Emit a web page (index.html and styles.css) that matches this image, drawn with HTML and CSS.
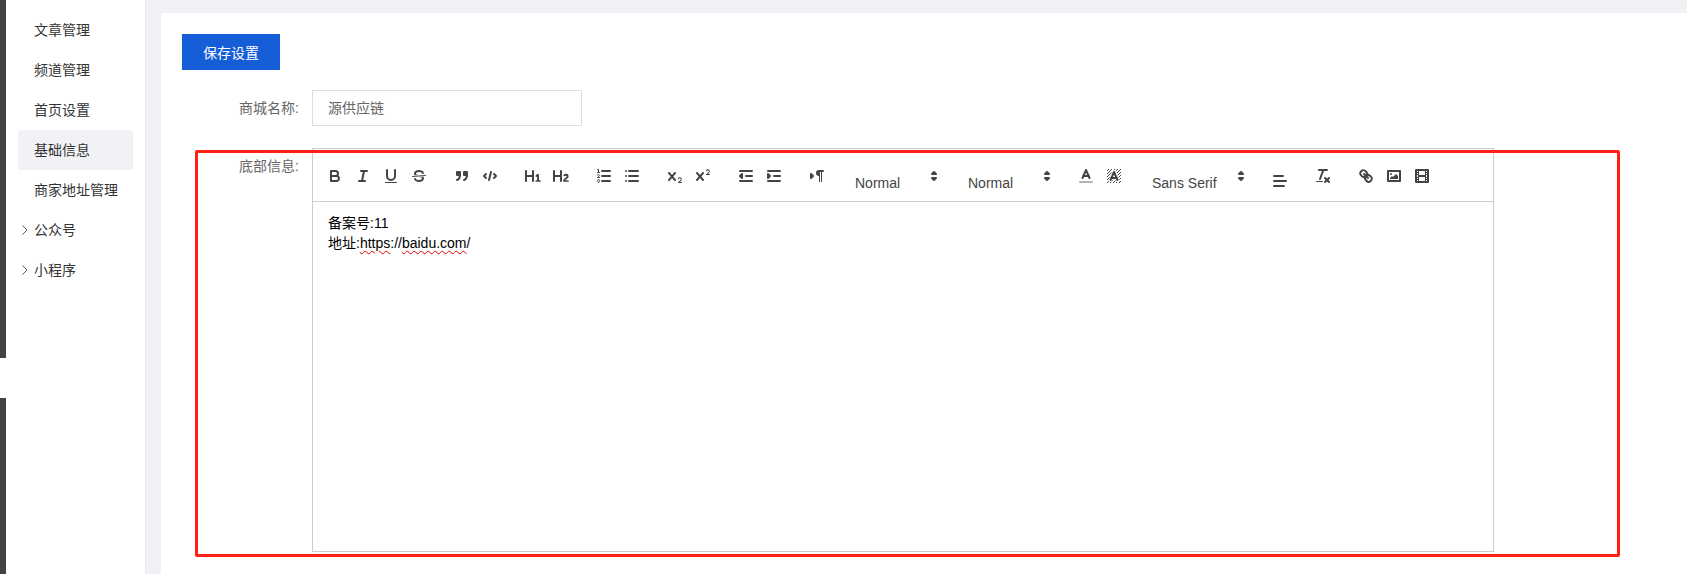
FILE: index.html
```html
<!DOCTYPE html>
<html lang="zh-CN">
<head>
<meta charset="utf-8">
<title>基础信息</title>
<link rel="stylesheet" href="styles.css">
</head>
<body>
<div class="app">
  <div class="rail"><div class="rail-top"></div><div class="rail-bottom"></div></div>
  <nav class="side">
    <a class="item">文章管理</a>
    <a class="item">频道管理</a>
    <a class="item">首页设置</a>
    <a class="item active">基础信息</a>
    <a class="item">商家地址管理</a>
    <a class="item"><svg class="chev" viewBox="0 0 8 12"><polyline points="1.5 1.5 6 6 1.5 10.5"/></svg>公众号</a>
    <a class="item"><svg class="chev" viewBox="0 0 8 12"><polyline points="1.5 1.5 6 6 1.5 10.5"/></svg>小程序</a>
  </nav>
  <main class="main">
    <section class="panel">
      <button class="save">保存设置</button>
      <div class="row">
        <label class="lab">商城名称:</label>
        <div class="input">源供应链</div>
      </div>
      <div class="row row-editor">
        <label class="lab">底部信息:</label>
        <div class="editor">
          <div class="toolbar">
            <div class="grp">
              <span class="btn"><svg viewBox="0 0 18 18"><path class="s" d="M5,4H9.5A2.5,2.5,0,0,1,12,6.5v0A2.5,2.5,0,0,1,9.5,9H5A0,0,0,0,1,5,9V4A0,0,0,0,1,5,4Z"/><path class="s" d="M5,9h5.5A2.5,2.5,0,0,1,13,11.5v0A2.5,2.5,0,0,1,10.5,14H5a0,0,0,0,1,0,0V9A0,0,0,0,1,5,9Z"/></svg></span>
              <span class="btn"><svg viewBox="0 0 18 18"><line class="s" x1="7" x2="13" y1="4" y2="4"/><line class="s" x1="5" x2="11" y1="14" y2="14"/><line class="s" x1="8" x2="10" y1="14" y2="4"/></svg></span>
              <span class="btn"><svg viewBox="0 0 18 18"><path class="s" d="M5,3V9a4.012,4.012,0,0,0,4,4H9a4.012,4.012,0,0,0,4-4V3"/><rect class="f" height="1" rx=".5" ry=".5" width="12" x="3" y="15"/></svg></span>
              <span class="btn"><svg viewBox="0 0 18 18"><line class="t" x1="15.5" x2="2.5" y1="8.5" y2="9.5"/><path class="f" d="M9.007,8C6.542,7.791,6,7.519,6,6.5,6,5.792,7.283,5,9,5c1.571,0,2.765.679,2.969,1.309a1,1,0,0,0,1.9-.617C13.356,4.106,11.354,3,9,3,6.2,3,4,4.538,4,6.5a3.2,3.2,0,0,0,.5,1.843Z"/><path class="f" d="M8.984,10C11.457,10.208,12,10.479,12,11.5c0,.708-1.283,1.5-3,1.5-1.571,0-2.765-.679-2.969-1.309a1,1,0,1,0-1.9.617C4.644,13.894,6.646,15,9,15c2.8,0,5-1.538,5-3.5a3.2,3.2,0,0,0-.5-1.843Z"/></svg></span>
            </div>
            <div class="grp">
              <span class="btn"><svg viewBox="0 0 18 18"><rect class="f s" height="3" width="3" x="4" y="5"/><rect class="f s" height="3" width="3" x="11" y="5"/><path class="s" d="M7,8c0,4.031-3,5-3,5"/><path class="s" d="M14,8c0,4.031-3,5-3,5"/></svg></span>
              <span class="btn"><svg viewBox="0 0 18 18"><polyline class="s" points="5 7 3 9 5 11"/><polyline class="s" points="13 7 15 9 13 11"/><line class="s" x1="10" x2="8" y1="5" y2="13"/></svg></span>
            </div>
            <div class="grp">
              <span class="btn"><svg viewBox="0 0 18 18"><path class="f" d="M10,4V14a1,1,0,0,1-2,0V10H3v4a1,1,0,0,1-2,0V4A1,1,0,0,1,3,4V8H8V4a1,1,0,0,1,2,0Zm6.06787,9.209H14.98975V7.59863a.54085.54085,0,0,0-.605-.60547h-.62744a1.01119,1.01119,0,0,0-.748.29688L11.645,8.56641a.5435.5435,0,0,0-.022.8584l.28613.30762a.53861.53861,0,0,0,.84717.0332l.09912-.08789a1.2137,1.2137,0,0,0,.2417-.35254h.02246s-.01123.30859-.01123.60547V13.209H12.041a.54085.54085,0,0,0-.605.60547v.43945a.54085.54085,0,0,0,.605.60547h4.02686a.54085.54085,0,0,0,.605-.60547v-.43945A.54085.54085,0,0,0,16.06787,13.209Z"/></svg></span>
              <span class="btn"><svg viewBox="0 0 18 18"><path class="f" d="M16.73975,13.81445v.43945a.54085.54085,0,0,1-.605.60547H11.855a.58392.58392,0,0,1-.64893-.60547V14.0127c0-2.90527,3.39941-3.42187,3.39941-4.55469a.77675.77675,0,0,0-.84717-.78125,1.17684,1.17684,0,0,0-.83594.38477c-.2749.26367-.561.374-.85791.13184l-.4292-.34082c-.30811-.24219-.38525-.51758-.1543-.81445a2.97155,2.97155,0,0,1,2.45361-1.17676,2.45393,2.45393,0,0,1,2.68408,2.40918c0,2.45312-3.1792,2.92676-3.27832,3.93848h2.79443A.54085.54085,0,0,1,16.73975,13.81445ZM9,3A.99974.99974,0,0,0,8,4V8H3V4A1,1,0,0,0,1,4V14a1,1,0,0,0,2,0V10H8v4a1,1,0,0,0,2,0V4A.99974.99974,0,0,0,9,3Z"/></svg></span>
            </div>
            <div class="grp">
              <span class="btn"><svg viewBox="0 0 18 18"><line class="s" x1="7" x2="15" y1="4" y2="4"/><line class="s" x1="7" x2="15" y1="9" y2="9"/><line class="s" x1="7" x2="15" y1="14" y2="14"/><line class="t" x1="2.5" x2="4.5" y1="5.5" y2="5.5"/><path class="f" d="M3.5,6A0.5,0.5,0,0,1,3,5.5V3.085l-0.276.138A0.5,0.5,0,0,1,2.053,3c-0.124-.247-0.023-0.324.224-0.447l1-.5A0.5,0.5,0,0,1,4,2.5v3A0.5,0.5,0,0,1,3.5,6Z"/><path class="t" d="M4.5,10.5h-2c0-.234,1.85-1.076,1.85-2.234A0.959,0.959,0,0,0,2.5,8.156"/><path class="t" d="M2.5,14.846a0.959,0.959,0,0,0,1.85-.109A0.7,0.7,0,0,0,3.75,14a0.688,0.688,0,0,0,.6-0.736,0.959,0.959,0,0,0-1.85-.109"/></svg></span>
              <span class="btn"><svg viewBox="0 0 18 18"><line class="s" x1="6" x2="15" y1="4" y2="4"/><line class="s" x1="6" x2="15" y1="9" y2="9"/><line class="s" x1="6" x2="15" y1="14" y2="14"/><line class="s" x1="3" x2="3" y1="4" y2="4"/><line class="s" x1="3" x2="3" y1="9" y2="9"/><line class="s" x1="3" x2="3" y1="14" y2="14"/></svg></span>
            </div>
            <div class="grp">
              <span class="btn"><svg viewBox="0 0 18 18"><path class="f" d="M15.5,15H13.861a3.858,3.858,0,0,0,1.914-2.975,1.8,1.8,0,0,0-1.6-1.751A1.921,1.921,0,0,0,12.021,11.7a0.50013,0.50013,0,1,0,.957.291h0a0.914,0.914,0,0,1,1.053-.725,0.81,0.81,0,0,1,.744.762c0,1.076-1.16971,1.86982-1.93971,2.43082A1.45639,1.45639,0,0,0,12,15.5a0.5,0.5,0,0,0,.5.5h3A0.5,0.5,0,0,0,15.5,15Z"/><path class="f" d="M9.65,5.241a1,1,0,0,0-1.409.108L6,7.964,3.759,5.349A1,1,0,0,0,2.192,6.59178Q2.21541,6.6213,2.241,6.649L4.684,9.5,2.241,12.35A1,1,0,0,0,3.71,13.70722q0.02557-.02768.049-0.05722L6,11.036,8.241,13.65a1,1,0,1,0,1.567-1.24277Q9.78459,12.3777,9.759,12.35L7.316,9.5,9.759,6.651A1,1,0,0,0,9.65,5.241Z"/></svg></span>
              <span class="btn"><svg viewBox="0 0 18 18"><path class="f" d="M15.5,7H13.861a4.015,4.015,0,0,0,1.914-2.975,1.8,1.8,0,0,0-1.6-1.751A1.922,1.922,0,0,0,12.021,3.7a0.5,0.5,0,1,0,.957.291,0.917,0.917,0,0,1,1.053-.725,0.81,0.81,0,0,1,.744.762c0,1.077-1.164,1.925-1.934,2.486A1.423,1.423,0,0,0,12,7.5a0.5,0.5,0,0,0,.5.5h3A0.5,0.5,0,0,0,15.5,7Z"/><path class="f" d="M9.651,5.241a1,1,0,0,0-1.41.108L6,7.964,3.759,5.349a1,1,0,1,0-1.519,1.3L4.683,9.5,2.241,12.35a1,1,0,1,0,1.519,1.3L6,11.036,8.241,13.65a1,1,0,0,0,1.519-1.3L7.317,9.5,9.759,6.651A1,1,0,0,0,9.651,5.241Z"/></svg></span>
            </div>
            <div class="grp">
              <span class="btn"><svg viewBox="0 0 18 18"><line class="s" x1="3" x2="15" y1="14" y2="14"/><line class="s" x1="3" x2="15" y1="4" y2="4"/><line class="s" x1="9" x2="15" y1="9" y2="9"/><polygon class="f s" points="5 7 5 11 3 9 5 7"/></svg></span>
              <span class="btn"><svg viewBox="0 0 18 18"><line class="s" x1="3" x2="15" y1="14" y2="14"/><line class="s" x1="3" x2="15" y1="4" y2="4"/><line class="s" x1="9" x2="15" y1="9" y2="9"/><polygon class="f s" points="3 7 3 11 5 9 3 7"/></svg></span>
            </div>
            <div class="grp">
              <span class="btn"><svg viewBox="0 0 18 18"><polygon class="f s" points="3 11 5 9 3 7 3 11"/><line class="s" x1="15" x2="11" y1="4" y2="4"/><path class="f" d="M11,3a3,3,0,0,0,0,6h1V3H11Z"/><rect class="f" height="11" width="1" x="11" y="4"/><rect class="f" height="11" width="1" x="13" y="4"/></svg></span>
            </div>
            <div class="grp">
              <div class="picker"><span class="plabel">Normal</span><svg class="arrow" viewBox="0 0 18 18"><polygon class="f s" points="7 11 9 13 11 11 7 11"/><polygon class="f s" points="7 7 9 5 11 7 7 7"/></svg></div>
            </div>
            <div class="grp">
              <div class="picker"><span class="plabel">Normal</span><svg class="arrow" viewBox="0 0 18 18"><polygon class="f s" points="7 11 9 13 11 11 7 11"/><polygon class="f s" points="7 7 9 5 11 7 7 7"/></svg></div>
            </div>
            <div class="grp">
              <span class="btn"><svg viewBox="0 0 18 18"><line class="s ghost" x1="3" x2="15" y1="15" y2="15"/><polyline class="s" points="5.5 11 9 3 12.5 11"/><line class="s" x1="11.63" x2="6.38" y1="9" y2="9"/></svg></span>
              <span class="btn"><svg viewBox="0 0 18 18"><g class="f"><polygon points="6 6.868 6 6 5 6 5 7 5.942 7 6 6.868"/><rect height="1" width="1" x="4" y="4"/><polygon points="6.817 5 6 5 6 6 6.38 6 6.817 5"/><rect height="1" width="1" x="2" y="6"/><rect height="1" width="1" x="3" y="5"/><rect height="1" width="1" x="4" y="7"/><polygon points="4 11.439 4 11 3 11 3 12 3.755 12 4 11.439"/><rect height="1" width="1" x="2" y="12"/><rect height="1" width="1" x="2" y="9"/><rect height="1" width="1" x="2" y="15"/><polygon points="4.63 10 4 10 4 11 4.192 11 4.63 10"/><rect height="1" width="1" x="3" y="8"/><path d="M10.832,4.2L11,4.582V4H10.708A1.948,1.948,0,0,1,10.832,4.2Z"/><path d="M7,4.582L7.168,4.2A1.929,1.929,0,0,1,7.292,4H7V4.582Z"/><path d="M8,13H7.683l-0.351.8a1.933,1.933,0,0,1-.124.2H8V13Z"/><rect height="1" width="1" x="12" y="2"/><rect height="1" width="1" x="11" y="3"/><path d="M9,3H8V3.282A1.985,1.985,0,0,1,9,3Z"/><rect height="1" width="1" x="2" y="3"/><rect height="1" width="1" x="6" y="2"/><rect height="1" width="1" x="3" y="2"/><rect height="1" width="1" x="5" y="3"/><rect height="1" width="1" x="9" y="2"/><rect height="1" width="1" x="15" y="14"/><polygon points="13.447 10.174 13.469 10.225 13.472 10.232 13.808 11 14 11 14 10 13.37 10 13.447 10.174"/><rect height="1" width="1" x="13" y="7"/><rect height="1" width="1" x="15" y="5"/><rect height="1" width="1" x="14" y="6"/><rect height="1" width="1" x="15" y="8"/><rect height="1" width="1" x="14" y="9"/><path d="M3.775,14H3v1H4V14.314A1.97,1.97,0,0,1,3.775,14Z"/><rect height="1" width="1" x="14" y="3"/><polygon points="12 6.868 12 6 11.62 6 12 6.868"/><rect height="1" width="1" x="15" y="2"/><rect height="1" width="1" x="12" y="5"/><rect height="1" width="1" x="13" y="4"/><polygon points="12.933 9 13 9 13 8 12.495 8 12.933 9"/><rect height="1" width="1" x="9" y="14"/><rect height="1" width="1" x="8" y="15"/><path d="M6,14.926V15H7V14.316A1.993,1.993,0,0,1,6,14.926Z"/><rect height="1" width="1" x="5" y="15"/><path d="M10.668,13.8L10.317,13H10v1h0.792A1.947,1.947,0,0,1,10.668,13.8Z"/><rect height="1" width="1" x="11" y="15"/><path d="M14.332,12.2a1.99,1.99,0,0,1,.166.8H15V12H14.245Z"/><rect height="1" width="1" x="14" y="15"/><rect height="1" width="1" x="15" y="11"/></g><polyline class="s" points="5.5 13 9 5 12.5 13"/><line class="s" x1="11.63" x2="6.38" y1="11" y2="11"/></svg></span>
            </div>
            <div class="grp">
              <div class="picker wide"><span class="plabel">Sans Serif</span><svg class="arrow" viewBox="0 0 18 18"><polygon class="f s" points="7 11 9 13 11 11 7 11"/><polygon class="f s" points="7 7 9 5 11 7 7 7"/></svg></div>
            </div>
            <div class="grp">
              <span class="btn low"><svg viewBox="0 0 18 18"><line class="s" x1="3" x2="15" y1="9" y2="9"/><line class="s" x1="3" x2="13" y1="14" y2="14"/><line class="s" x1="3" x2="12" y1="4" y2="4"/></svg></span>
            </div>
            <div class="grp">
              <span class="btn"><svg viewBox="0 0 18 18"><line class="s" x1="5" x2="13" y1="3" y2="3"/><line class="s" x1="6" x2="9.35" y1="12" y2="3"/><line class="s" x1="11" x2="15" y1="11" y2="15"/><line class="s" x1="15" x2="11" y1="11" y2="15"/><rect class="f" height="1" rx=".5" ry=".5" width="7" x="2" y="14"/></svg></span>
            </div>
            <div class="grp">
              <span class="btn"><svg viewBox="0 0 18 18"><line class="s" x1="7" x2="11" y1="7" y2="11"/><path class="s" d="M8.9,4.577a3.476,3.476,0,0,1,.36,4.679A3.476,3.476,0,0,1,4.577,8.9C3.185,7.5,2.035,6.4,4.217,4.217S7.5,3.185,8.9,4.577Z"/><path class="s" d="M13.423,9.1a3.476,3.476,0,0,0-4.679-.36,3.476,3.476,0,0,0,.36,4.679c1.392,1.392,2.5,2.542,4.679.36S14.815,10.5,13.423,9.1Z"/></svg></span>
              <span class="btn"><svg viewBox="0 0 18 18"><rect class="s" height="10" width="12" x="3" y="4"/><circle class="f" cx="6" cy="7" r="1"/><polyline class="f" points="5 12 5 11 7 9 8 10 11 7 13 9 13 12 5 12"/></svg></span>
              <span class="btn"><svg viewBox="0 0 18 18"><rect class="s" height="12" width="12" x="3" y="3"/><rect class="f" height="12" width="1" x="5" y="3"/><rect class="f" height="12" width="1" x="12" y="3"/><rect class="f" height="2" width="8" x="5" y="8"/><rect class="f" height="1" width="3" x="3" y="5"/><rect class="f" height="1" width="3" x="3" y="7"/><rect class="f" height="1" width="3" x="3" y="10"/><rect class="f" height="1" width="3" x="3" y="12"/><rect class="f" height="1" width="3" x="12" y="5"/><rect class="f" height="1" width="3" x="12" y="7"/><rect class="f" height="1" width="3" x="12" y="10"/><rect class="f" height="1" width="3" x="12" y="12"/></svg></span>
            </div>
          </div>
          <div class="content">
            <p>备案号:11</p>
            <p>地址:<span class="sp">https</span>://<span class="sp">baidu.com</span>/</p>
          </div>
        </div>
      </div>
    </section>
  </main>
</div>
<div class="mark"></div>
</body>
</html>
```
FILE: styles.css
```css
* { box-sizing: border-box; }
html, body { margin: 0; padding: 0; height: 100%; }
body {
  overflow: hidden;
  background: #fff;
  font-family: "Liberation Sans", "Noto Sans CJK SC", sans-serif;
  font-size: 14px;
  color: #333;
}
.app { display: flex; height: 574px; }

.rail { width: 6px; flex: none; display: flex; flex-direction: column; gap: 40px; }
.rail-top { height: 358px; background: #444; }
.rail-bottom { flex: 1; background: #444; }

.side {
  width: 140px;
  flex: none;
  padding: 10px 12px 0;
  background: #fff;
  border-right: 1px solid #e8eaec;
}
.item {
  position: relative;
  display: block;
  width: 115px;
  height: 40px;
  padding-left: 16px;
  line-height: 40px;
  color: #333;
  border-radius: 2px;
}
.item.active { background: #f1f2f5; }
.chev {
  position: absolute;
  left: 3px;
  top: 14px;
  width: 8px;
  height: 12px;
  fill: none;
  stroke: #555;
  stroke-width: 1;
}

.main { flex: 1; min-width: 0; background: #f0f1f5; padding: 13px 0 0 15px; }
.panel {
  height: 100%;
  background: #fff;
  border-radius: 2px 0 0 0;
  padding: 21px 0 0 21px;
}
.save {
  display: block;
  width: 98px;
  height: 36px;
  padding: 0;
  border: 0;
  background: #165dd8;
  color: #fff;
  font: inherit;
}
.row { display: flex; gap: 13px; margin-top: 20px; }
.row-editor { margin-top: 22px; }
.lab {
  width: 117px;
  flex: none;
  text-align: right;
  line-height: 36px;
  color: #666;
}
.input {
  width: 270px;
  height: 36px;
  padding-left: 15px;
  line-height: 34px;
  border: 1px solid #dcdee2;
  color: #666;
}

.editor { width: 1182px; height: 404px; border: 1px solid #ccc; }
.toolbar {
  display: flex;
  gap: 15px;
  height: 53px;
  padding: 15px 8px 0;
  border-bottom: 1px solid #ccc;
}
.grp { display: flex; }
.btn { display: block; width: 28px; height: 24px; padding: 3px 5px; }
.btn.low { padding-top: 8px; height: 29px; }
.btn svg, .arrow { display: block; width: 18px; height: 18px; }
.picker { position: relative; width: 98px; height: 24px; }
.picker.wide { width: 108px; }
.plabel {
  display: block;
  padding: 8px 0 0 9px;
  line-height: 22px;
  color: #444;
}
.arrow { position: absolute; right: 1px; top: 3px; }

.s { fill: none; stroke: #444; stroke-width: 2; stroke-linecap: round; stroke-linejoin: round; }
.t { fill: none; stroke: #444; stroke-width: 1; stroke-linecap: round; stroke-linejoin: round; }
.f { fill: #444; }
.f.s { fill: #444; }
.ghost { opacity: .4; }

.content { padding: 11px 15px; line-height: 20px; color: #000; }
.content p { margin: 0; }
.sp { text-decoration: underline wavy #e00; text-decoration-thickness: 1px; text-underline-offset: 2px; }

.mark {
  position: absolute;
  left: 195px;
  top: 150px;
  width: 1425px;
  height: 407px;
  border: 3px solid #ff2213;
  border-radius: 2px;
}
```
